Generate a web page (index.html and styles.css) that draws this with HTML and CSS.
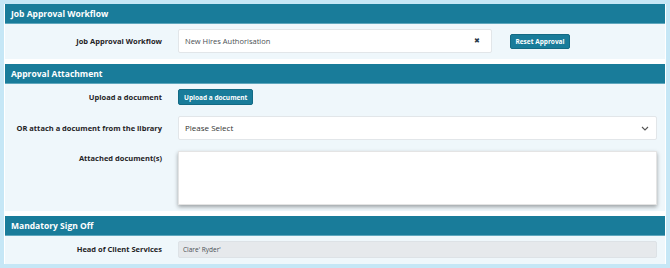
FILE: index.html
```html
<!DOCTYPE html>
<html lang="en">
<head>
    <meta charset="UTF-8">
    <title>Job Approval</title>
    <link rel="stylesheet" href="styles.css">
</head>
<body>
    <div class="frame">
        <section class="panel">
            <h2 class="panel-title">Job Approval Workflow</h2>
            <div class="panel-body">
                <div class="row">
                    <label class="row-label">Job Approval Workflow</label>
                    <div class="row-field inline">
                        <div class="text-box workflow-box">
                            <span>New Hires Authorisation</span>
                            <span class="clear">&#x2716;</span>
                        </div>
                        <button class="btn btn-small">Reset Approval</button>
                    </div>
                </div>
            </div>
        </section>

        <section class="panel">
            <h2 class="panel-title">Approval Attachment</h2>
            <div class="panel-body stacked">
                <div class="row">
                    <label class="row-label">Upload a document</label>
                    <div class="row-field">
                        <button class="btn">Upload a document</button>
                    </div>
                </div>
                <div class="row">
                    <label class="row-label">OR attach a document from the library</label>
                    <div class="row-field">
                        <div class="text-box select-box">
                            <span>Please Select</span>
                            <svg class="chevron" width="8" height="5" viewBox="0 0 8 5"><path d="M1 1l3 3 3-3" fill="none" stroke="#555" stroke-width="1.1"/></svg>
                        </div>
                    </div>
                </div>
                <div class="row top">
                    <label class="row-label">Attached document(s)</label>
                    <div class="row-field">
                        <div class="doc-list"></div>
                    </div>
                </div>
            </div>
        </section>

        <section class="panel">
            <h2 class="panel-title">Mandatory Sign Off</h2>
            <div class="panel-body">
                <div class="row">
                    <label class="row-label">Head of Client Services</label>
                    <div class="row-field">
                        <div class="text-box readonly">Clare' Ryder'</div>
                    </div>
                </div>
            </div>
        </section>
    </div>
</body>
</html>
```

FILE: styles.css
```css
:root {
    --teal: #197c9a;
    --panel-bg: #eff7fb;
    --frame-border: #c6e7f6;
    --label: #1f2326;
}

body {
    margin: 0;
    font-family: 'Open Sans', sans-serif;
    line-height: 1.2;
    background: #fff;
}

.frame {
    box-sizing: border-box;
    width: 670px;
    height: 268px;
    border: 4px solid var(--frame-border);
    padding: 0 1px 0 1px;
    background: #fff;
    overflow: hidden;
}

.panel {
    background: var(--panel-bg);
    margin-bottom: 5px;
}

.panel:last-child {
    margin-bottom: 0;
}

.panel-title {
    margin: 0;
    height: 20px;
    line-height: 20px;
    padding-left: 6px;
    background: var(--teal);
    color: #fff;
    font-size: 8.5px;
    font-weight: 700;
    border-bottom: 1px solid #5fa7bd;
    box-sizing: border-box;
}

.panel-body {
    padding: 5px 8px 6px 0;
}

.panel-body.stacked {
    display: flex;
    flex-direction: column;
    gap: 11px;
}

.row {
    display: grid;
    grid-template-columns: 157px 1fr;
    column-gap: 16px;
    align-items: center;
}

.row.top {
    align-items: start;
}

.row.top .row-label {
    padding-top: 3px;
}

.row-label {
    text-align: right;
    font-size: 7.5px;
    font-weight: 700;
    color: var(--label);
}

.row-field {
    display: flex;
    flex-direction: column;
    align-items: stretch;
}

.row-field .btn {
    align-self: flex-start;
}

.row-field.inline {
    flex-direction: row;
    align-items: center;
    gap: 18px;
}

.row-field.inline .btn {
    align-self: center;
}

.text-box {
    box-sizing: border-box;
    display: flex;
    align-items: center;
    justify-content: space-between;
    background: #fff;
    border: 1px solid #e2e6e9;
    border-radius: 2px;
    padding: 0 6px;
    color: #4a4f53;
}

.workflow-box {
    width: 314px;
    height: 24px;
    font-size: 7.5px;
}

.clear {
    font-size: 7px;
    color: #2a3a48;
    margin-right: 5px;
}

.select-box {
    height: 24px;
    font-size: 8px;
    color: #333;
}

.chevron {
    margin-right: 1px;
}

.doc-list {
    box-sizing: border-box;
    height: 54px;
    background: #fff;
    border: 1px solid #e4e4e4;
    box-shadow: 0 2px 4px rgba(0, 0, 0, 0.35);
}

.readonly {
    height: 17px;
    background: #e6e9ec;
    border-color: #dde2e6;
    font-size: 6.5px;
    padding: 0 4px;
    justify-content: flex-start;
}

.btn {
    box-sizing: border-box;
    background: var(--teal);
    color: #fff;
    border: 1px solid #136a84;
    border-radius: 2px;
    font-family: 'Open Sans', sans-serif;
    font-size: 6.5px;
    font-weight: 700;
    height: 16px;
    padding: 0 5px;
    cursor: pointer;
}

.btn-small {
    height: 15px;
    width: 60px;
    padding: 0;
}
```
